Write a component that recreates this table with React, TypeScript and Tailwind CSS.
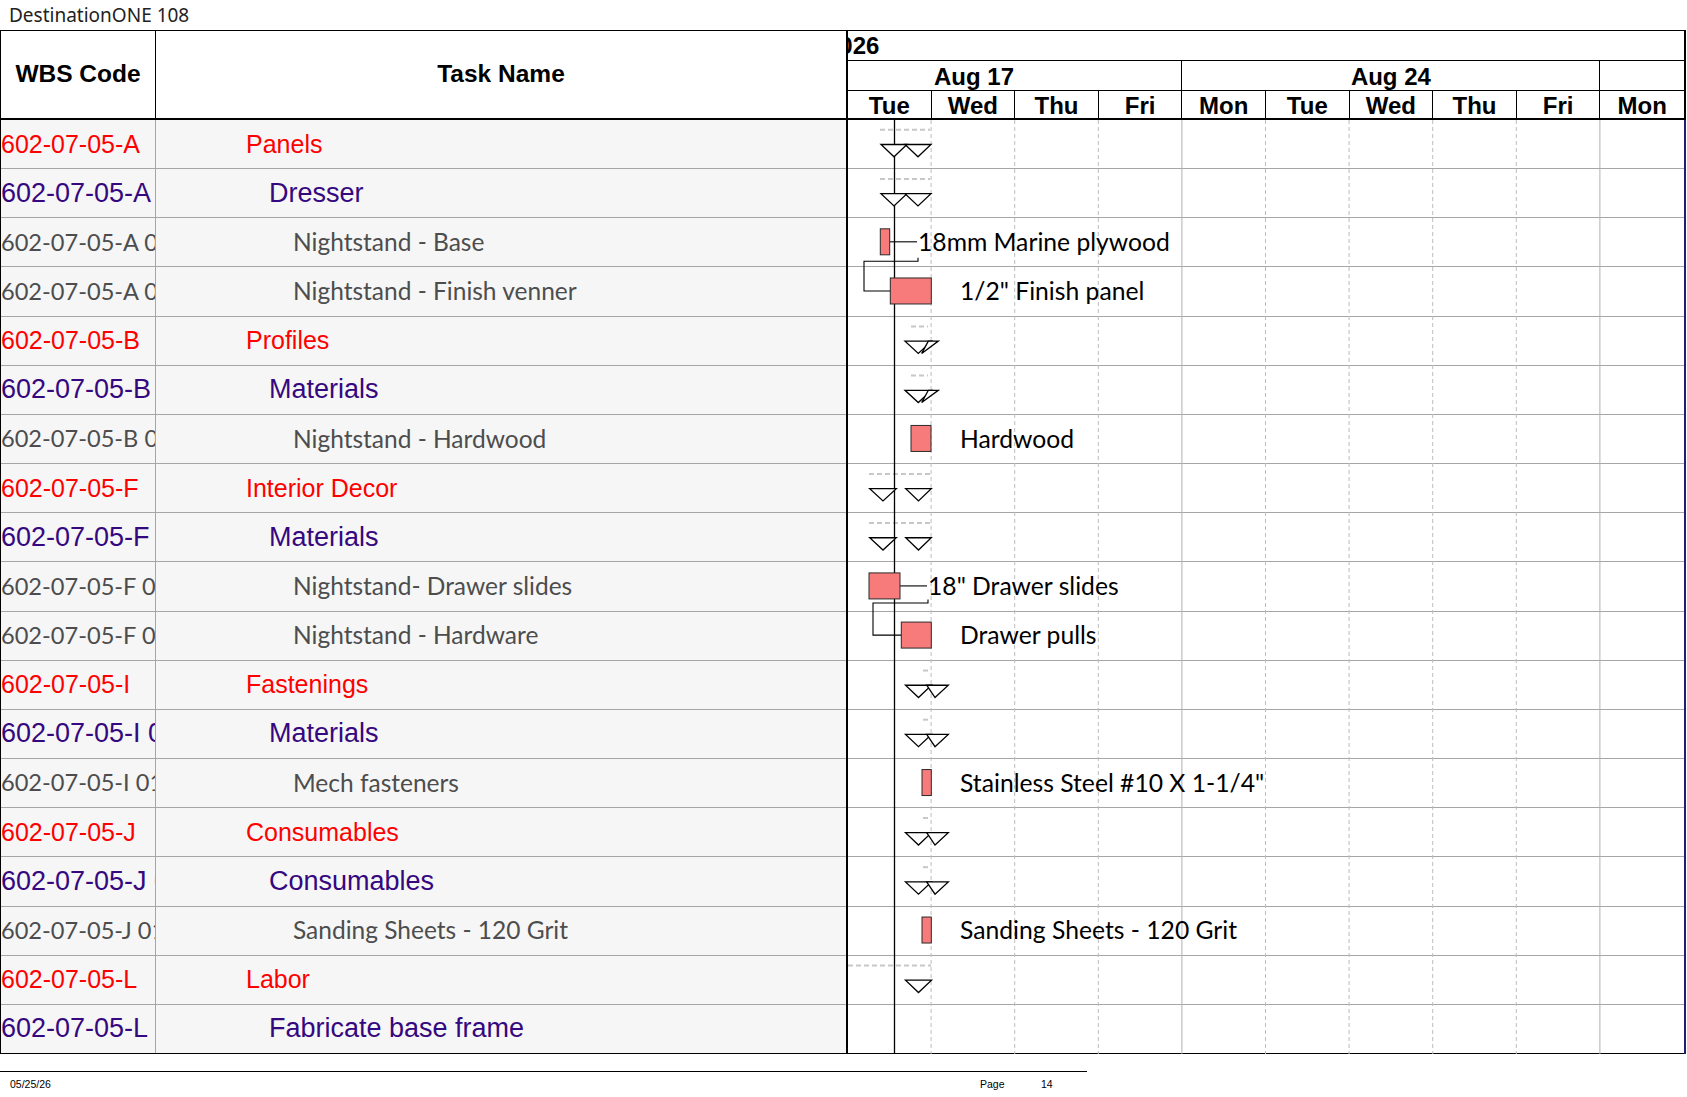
import React from "react";

type Level = 1 | 2 | 3;
type Row = { code: string; name: string; level: Level };

const rows: Row[] = [
  { code: "602-07-05-A", name: "Panels", level: 1 },
  { code: "602-07-05-A 01", name: "Dresser", level: 2 },
  { code: "602-07-05-A 0101", name: "Nightstand - Base", level: 3 },
  { code: "602-07-05-A 0102", name: "Nightstand - Finish venner", level: 3 },
  { code: "602-07-05-B", name: "Profiles", level: 1 },
  { code: "602-07-05-B 01", name: "Materials", level: 2 },
  { code: "602-07-05-B 0101", name: "Nightstand - Hardwood", level: 3 },
  { code: "602-07-05-F", name: "Interior Decor", level: 1 },
  { code: "602-07-05-F 01", name: "Materials", level: 2 },
  { code: "602-07-05-F 0101", name: "Nightstand- Drawer slides", level: 3 },
  { code: "602-07-05-F 0102", name: "Nightstand - Hardware", level: 3 },
  { code: "602-07-05-I", name: "Fastenings", level: 1 },
  { code: "602-07-05-I 01", name: "Materials", level: 2 },
  { code: "602-07-05-I 0101", name: "Mech fasteners", level: 3 },
  { code: "602-07-05-J", name: "Consumables", level: 1 },
  { code: "602-07-05-J 01", name: "Consumables", level: 2 },
  { code: "602-07-05-J 0101", name: "Sanding Sheets - 120 Grit", level: 3 },
  { code: "602-07-05-L", name: "Labor", level: 1 },
  { code: "602-07-05-L 01", name: "Fabricate base frame", level: 2 },
];

const wbsCls: Record<Level, string> = {
  1: "text-[#f00] text-[25px] font-['Liberation_Sans',Arial,sans-serif]",
  2: "text-[#35087f] text-[27px] font-['Liberation_Sans',Arial,sans-serif]",
  3: "text-[#4d4d4d] text-[23.6px] font-['Lato',sans-serif]",
};
const nameCls: Record<Level, string> = {
  1: "text-[#f00] text-[25px] pl-[90px] font-['Liberation_Sans',Arial,sans-serif]",
  2: "text-[#35087f] text-[27px] pl-[113px] font-['Liberation_Sans',Arial,sans-serif]",
  3: "text-[#4d4d4d] text-[24.5px] pl-[137px] font-['Lato',sans-serif]",
};

const days = ["Tue", "Wed", "Thu", "Fri", "Mon", "Tue", "Wed", "Thu", "Fri", "Mon"];

const BODY_H = 934;
const H = BODY_H / 19;
const COL = 83.6;
const top = (i: number) => i * H;

type Label = { row: number; x: number; text: string };
const labels: Label[] = [
  { row: 2, x: 70, text: "18mm Marine plywood" },
  { row: 3, x: 112, text: '1/2" Finish panel' },
  { row: 6, x: 112, text: "Hardwood" },
  { row: 9, x: 80, text: '18" Drawer slides' },
  { row: 10, x: 112, text: "Drawer pulls" },
  { row: 13, x: 112, text: 'Stainless Steel #10 X 1-1/4"' },
  { row: 16, x: 112, text: "Sanding Sheets - 120 Grit" },
];

const bars = [
  { row: 2, x: 32.3, w: 9.4 },
  { row: 3, x: 42.3, w: 41 },
  { row: 6, x: 63, w: 20 },
  { row: 9, x: 21, w: 31 },
  { row: 10, x: 53.3, w: 30 },
  { row: 13, x: 74, w: 9.3 },
  { row: 16, x: 74, w: 9.3 },
];

const TRI_T = 24.5;
const TRI_H = 12.3;
const tri = (row: number, cx: number, w: number) => {
  const y = top(row) + TRI_T;
  return `${cx - w / 2},${y} ${cx + w / 2},${y} ${cx},${y + TRI_H}`;
};
const triPts = (row: number, a: number, b: number, tip: number) => {
  const y = top(row) + TRI_T;
  return `${a},${y} ${b},${y} ${tip},${y + TRI_H}`;
};

const milestones: string[] = [];
const dashes: { row: number; x1: number; x2: number }[] = [];
[0, 1].forEach((r) => {
  dashes.push({ row: r, x1: 32, x2: 82 });
  milestones.push(tri(r, 46, 26), tri(r, 70, 26));
});
[4, 5].forEach((r) => {
  dashes.push({ row: r, x1: 63, x2: 80 });
  milestones.push(tri(r, 70.3, 26.6), triPts(r, 80.3, 90.3, 73.7));
});
[7, 8].forEach((r) => {
  dashes.push({ row: r, x1: 21, x2: 83 });
  milestones.push(tri(r, 35, 26.6), tri(r, 70.5, 25.6));
});
[11, 12, 14, 15].forEach((r) => {
  dashes.push({ row: r, x1: 75, x2: 80 });
  milestones.push(tri(r, 70.5, 26), triPts(r, 78.7, 100.3, 87));
});
dashes.push({ row: 17, x1: 0, x2: 83 });
milestones.push(tri(17, 70.5, 26));

function GanttSvg() {
  const grid = [];
  for (let k = 1; k < 10; k++) {
    const x = k * COL - 0.5;
    const mon = k === 4 || k === 9;
    grid.push(
      <line
        key={k}
        x1={x}
        x2={x}
        y1={0}
        y2={BODY_H}
        stroke={mon ? "#b0b0b0" : "#bdbdbd"}
        strokeWidth={1}
        strokeDasharray={mon ? undefined : "4 3"}
      />
    );
  }
  const l1y = top(2) + 23.5;
  const l2y = top(9) + 23.5;
  return (
    <svg
      className="absolute inset-0 pointer-events-none"
      width={836}
      height={BODY_H}
      viewBox={`0 0 836 ${BODY_H}`}
    >
      {grid}
      {dashes.map((d, i) => (
        <line
          key={"d" + i}
          x1={d.x1}
          x2={d.x2}
          y1={top(d.row) + 9.8}
          y2={top(d.row) + 9.8}
          stroke="#c8c8c8"
          strokeWidth={2}
          strokeDasharray="5 3"
        />
      ))}
      <line x1={46.5} x2={46.5} y1={0} y2={BODY_H} stroke="#000" strokeWidth={1.3} />
      {/* bar-to-label connectors */}
      <path d={`M41.7 ${l1y} H69`} fill="none" stroke="#000" strokeWidth={1.1} />
      <path d={`M52 ${l2y} H79`} fill="none" stroke="#000" strokeWidth={1.1} />
      {/* dependency links */}
      <path
        d={`M70 ${top(2) + 39.5} V${top(2) + 43} H16 V${top(3) + 23.5} H42.3`}
        fill="none"
        stroke="#000"
        strokeWidth={1.1}
      />
      <path
        d={`M80 ${top(9) + 37} V${top(9) + 40.6} H25 V${top(10) + 23.5} H53.3`}
        fill="none"
        stroke="#000"
        strokeWidth={1.1}
      />
      {bars.map((b, i) => (
        <rect
          key={"b" + i}
          x={b.x}
          y={top(b.row) + 10.5}
          width={b.w}
          height={26}
          fill="#f87b7b"
          stroke="#2a2a2a"
          strokeWidth={1}
        />
      ))}
      {milestones.map((p, i) => (
        <polygon key={"m" + i} points={p} fill="#fff" stroke="#000" strokeWidth={1.3} />
      ))}
    </svg>
  );
}

export default function App() {
  return (
    <div className="w-[1687px] h-[1097px] bg-white overflow-hidden text-black font-['Liberation_Sans',Arial,sans-serif]">
      <div className="h-[30px] pl-[9px] flex items-center text-[19px] text-[#222] font-['Noto_Sans',sans-serif] leading-none">
        DestinationONE 108
      </div>
      <div className="flex w-[1686px] border-t border-black">
        {/* Left table */}
        <div className="w-[848px] shrink-0 border-l border-r-2 border-black flex flex-col">
          <div className="h-[89px] flex border-b-2 border-black bg-white">
            <div className="w-[155px] shrink-0 border-r border-black flex items-center justify-center font-bold text-[24.5px]">
              WBS Code
            </div>
            <div className="flex-1 flex items-center justify-center font-bold text-[24.5px]">
              Task Name
            </div>
          </div>
          <div className="grid grid-rows-[repeat(19,minmax(0,1fr))] h-[934px] bg-[#f6f6f6]">
            {rows.map((r, i) => (
              <div
                key={i}
                className={
                  i === rows.length - 1
                    ? "flex border-b border-black"
                    : "flex border-b border-[#a6a6a6]"
                }
              >
                <div
                  className={
                    "w-[155px] shrink-0 border-r border-[#a6a6a6] overflow-hidden whitespace-nowrap flex items-center leading-none " +
                    wbsCls[r.level]
                  }
                >
                  {r.code}
                </div>
                <div
                  className={"flex-1 flex items-center whitespace-nowrap overflow-hidden leading-none " + nameCls[r.level]}
                >
                  {r.name}
                </div>
              </div>
            ))}
          </div>
        </div>
        {/* Gantt */}
        <div className="w-[838px] shrink-0 flex flex-col">
          <div className="h-[89px] flex flex-col border-b-2 border-r-2 border-black font-bold">
            <div className="h-[30px] border-b border-black overflow-hidden flex items-center">
              <span className="ml-[-22px] text-[24px] leading-none">2026</span>
            </div>
            <div className="h-[30px] border-b border-black grid grid-cols-10">
              <div className="col-span-4 border-r border-black overflow-hidden flex items-center">
                <div className="w-[420px] ml-[-84px] shrink-0 text-center text-[24px] leading-none pt-[2px]">
                  Aug 17
                </div>
              </div>
              <div className="col-span-5 border-r border-black flex items-center justify-center text-[24px] leading-none pt-[2px]">
                Aug 24
              </div>
              <div className="col-span-1" />
            </div>
            <div className="flex-1 grid grid-cols-10">
              {days.map((d, i) => (
                <div
                  key={i}
                  className={
                    i === days.length - 1
                      ? "flex items-center justify-center text-[24px] leading-none pt-[3px]"
                      : "border-r border-black flex items-center justify-center text-[24px] leading-none pt-[3px]"
                  }
                >
                  {d}
                </div>
              ))}
            </div>
          </div>
          <div className="relative h-[934px] border-r-2 border-[#1f1f78] bg-white">
            <div className="grid grid-rows-[repeat(19,minmax(0,1fr))] h-full">
              {rows.map((_, i) => {
                const lb = labels.find((l) => l.row === i);
                return (
                  <div
                    key={i}
                    className={
                      i === rows.length - 1
                        ? "flex items-center border-b border-black"
                        : "flex items-center border-b border-[#a6a6a6]"
                    }
                  >
                    {lb ? (
                      <span
                        className="relative z-10 whitespace-nowrap text-[24.7px] leading-none font-['Lato',sans-serif] text-black"
                        style={{ marginLeft: lb.x }}
                      >
                        {lb.text}
                      </span>
                    ) : null}
                  </div>
                );
              })}
            </div>
            <GanttSvg />
          </div>
        </div>
      </div>
      <div className="mt-[17px] w-[1087px] border-t border-black" />
      <div className="flex items-center h-[24px] text-[10.5px] leading-none">
        <span className="w-[980px] pl-[10px] shrink-0">05/25/26</span>
        <span className="w-[61px] shrink-0">Page</span>
        <span>14</span>
      </div>
    </div>
  );
}
